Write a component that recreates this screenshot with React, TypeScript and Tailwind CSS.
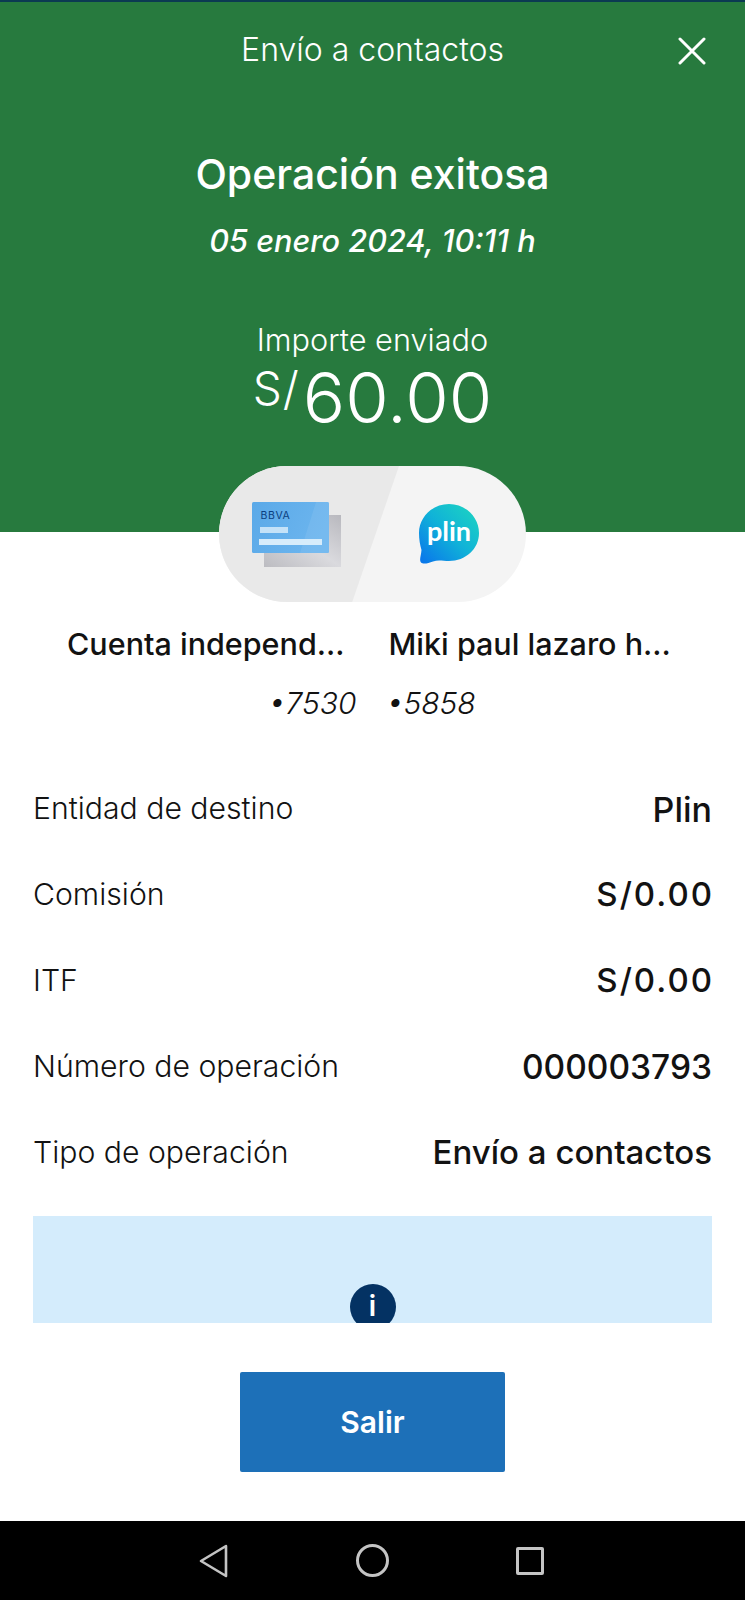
const FONT = "font-['Inter','Liberation_Sans',sans-serif]";

const ROWS = [
  { label: "Entidad de destino", value: "Plin", size: "text-[34px]" },
  { label: "Comisión", value: "S/0.00", size: "text-[33px] tracking-[2px] -mr-[2px]" },
  { label: "ITF", value: "S/0.00", size: "text-[33px] tracking-[2px] -mr-[2px]" },
  { label: "Número de operación", value: "000003793", size: "text-[33.5px]" },
  { label: "Tipo de operación", value: "Envío a contactos", size: "text-[33px]" },
];

function CardArt() {
  return (
    <svg width="92" height="66" viewBox="0 0 92 66" className="block">
      <defs>
        <linearGradient id="back" x1="1" y1="0" x2="0" y2="1">
          <stop offset="0" stopColor="#b8b8be" />
          <stop offset="0.5" stopColor="#dadade" />
          <stop offset="1" stopColor="#bcbcc1" />
        </linearGradient>
        <linearGradient id="front" x1="0" y1="0" x2="1" y2="0.3">
          <stop offset="0" stopColor="#5aa9e8" />
          <stop offset="1" stopColor="#6cb5ee" />
        </linearGradient>
      </defs>
      <rect x="12" y="13" width="77" height="52" fill="url(#back)" />
      <rect x="0" y="0" width="77" height="51" rx="1.5" fill="url(#front)" />
      <path d="M64 0 L48 51 L77 51 L77 0 Z" fill="#8ac4f0" opacity="0.35" />
      <text x="8.5" y="17" fontSize="10.5" fontWeight="400" fill="#0b3f80" fontFamily="Inter, sans-serif" letterSpacing="0.6">
        BBVA
      </text>
      <rect x="8" y="25" width="28" height="6" fill="#c4e2f8" />
      <rect x="7" y="37" width="63" height="6" fill="#d6ecfb" />
    </svg>
  );
}

function PlinBadge() {
  return (
    <svg width="62" height="62" viewBox="0 0 62 62" className="block">
      <defs>
        <linearGradient id="plin" x1="0" y1="1" x2="1" y2="0">
          <stop offset="0.05" stopColor="#0a78ea" />
          <stop offset="0.5" stopColor="#10b2d8" />
          <stop offset="0.9" stopColor="#1bd0c4" />
        </linearGradient>
      </defs>
      <path
        d="M31 1 C47.5 1 61 14 61 30 C61 46 47.5 58 31 58 C25 58 20 56.5 15 58.5 C10 60.5 5 61.5 3 59.5 C1 57.5 3 53 3.5 47 C2 42 1 36 1 30 C1 14 14.5 1 31 1 Z"
        fill="url(#plin)"
      />
      <text x="31" y="38" textAnchor="middle" fontSize="27" fontWeight="700" fill="#fff" fontFamily="Lato, sans-serif">
        plin
      </text>
    </svg>
  );
}

function BackIcon() {
  return (
    <svg width="30" height="34" viewBox="0 0 30 34" fill="none" stroke="#c4c4c4" strokeWidth="2.6" strokeLinejoin="round">
      <path d="M27 2 L2 17 L27 32 Z" />
    </svg>
  );
}

export default function App() {
  return (
    <div className={`${FONT} flex h-[1600px] w-[745px] flex-col overflow-hidden bg-white text-[#121212]`}>
      <header className="h-[532px] shrink-0 border-t-2 border-[#0b3a52] bg-[#277a3e] text-center text-white">
        <div className="relative flex h-[98px] items-center justify-center pb-[3px]">
          <h1 className="text-[32px] font-light leading-none">Envío a contactos</h1>
          <svg className="absolute left-[678px] top-[35px]" width="28" height="28" viewBox="0 0 28 28" stroke="white" strokeWidth="3" strokeLinecap="round">
            <path d="M2 2 L26 26 M26 2 L2 26" />
          </svg>
        </div>
        <h2 className="mt-[50px] text-[41px] font-medium leading-[48px]">Operación exitosa</h2>
        <p className="mt-[24px] text-[30.7px] font-medium italic leading-[38px]">05 enero 2024, 10:11 h</p>
        <p className="mt-[62px] text-[30.7px] font-light leading-[36px]">Importe enviado</p>
        <div className="mt-[4px] flex items-start justify-center font-light">
          <span className="mr-[3px] mt-[2px] text-[46px] leading-[48px] tracking-[1px]">S/</span>
          <span className="text-[70.5px] leading-[72px]">60.00</span>
        </div>
      </header>

      <div className="relative mx-auto -mt-[66px] flex h-[136px] w-[307px] shrink-0 items-center overflow-hidden rounded-full bg-[#f4f4f4]">
        <div className="absolute inset-y-0 left-0 w-[180px] bg-[#e9e9e9] [clip-path:polygon(0_0,100%_0,74%_100%,0_100%)]" />
        <div className="relative ml-[33px] mt-[2px]">
          <CardArt />
        </div>
        <div className="relative ml-[74px]">
          <PlinBadge />
        </div>
      </div>

      <div className="mt-[21px] grid shrink-0 grid-cols-2 gap-x-[32px] px-[33px] text-[30px]">
        <div className="pl-[34px] text-[30.5px] font-medium leading-[42px]">Cuenta independ...</div>
        <div className="whitespace-nowrap text-[30.5px] font-medium leading-[42px]">Miki paul lazaro h...</div>
        <div className="mt-[17px] text-right font-light italic leading-[42px]">•7530</div>
        <div className="mt-[17px] -ml-[2px] font-light italic leading-[42px]">•5858</div>
      </div>

      <dl className="mt-[42px] flex shrink-0 flex-col px-[33px]">
        {ROWS.map((r) => (
          <div key={r.label} className="flex h-[86px] items-center justify-between">
            <dt className="text-[30.2px] font-light">{r.label}</dt>
            <dd className={`${r.size} font-medium`}>{r.value}</dd>
          </div>
        ))}
      </dl>

      <div className="mx-[33px] mt-[20px] flex h-[107px] shrink-0 justify-center overflow-hidden bg-[#d4ecfc]">
        <div className="mt-[68px] flex h-[46px] w-[46px] shrink-0 items-start justify-center rounded-full bg-[#043263] pt-[8px] text-[28px] font-semibold leading-none text-white">
          i
        </div>
      </div>

      <div className="mt-[49px] flex shrink-0 justify-center">
        <button className="h-[100px] w-[265px] rounded-[2px] bg-[#1d70b8] text-[30px] font-semibold text-white">Salir</button>
      </div>

      <nav className="mt-auto flex h-[79px] shrink-0 items-center justify-center gap-[127px] bg-black pr-[2px]">
        <BackIcon />
        <span className="h-[33px] w-[33px] rounded-full border-[3px] border-[#c4c4c4]" />
        <span className="h-[28px] w-[28px] rounded-[2px] border-[3px] border-[#c4c4c4]" />
      </nav>
    </div>
  );
}
